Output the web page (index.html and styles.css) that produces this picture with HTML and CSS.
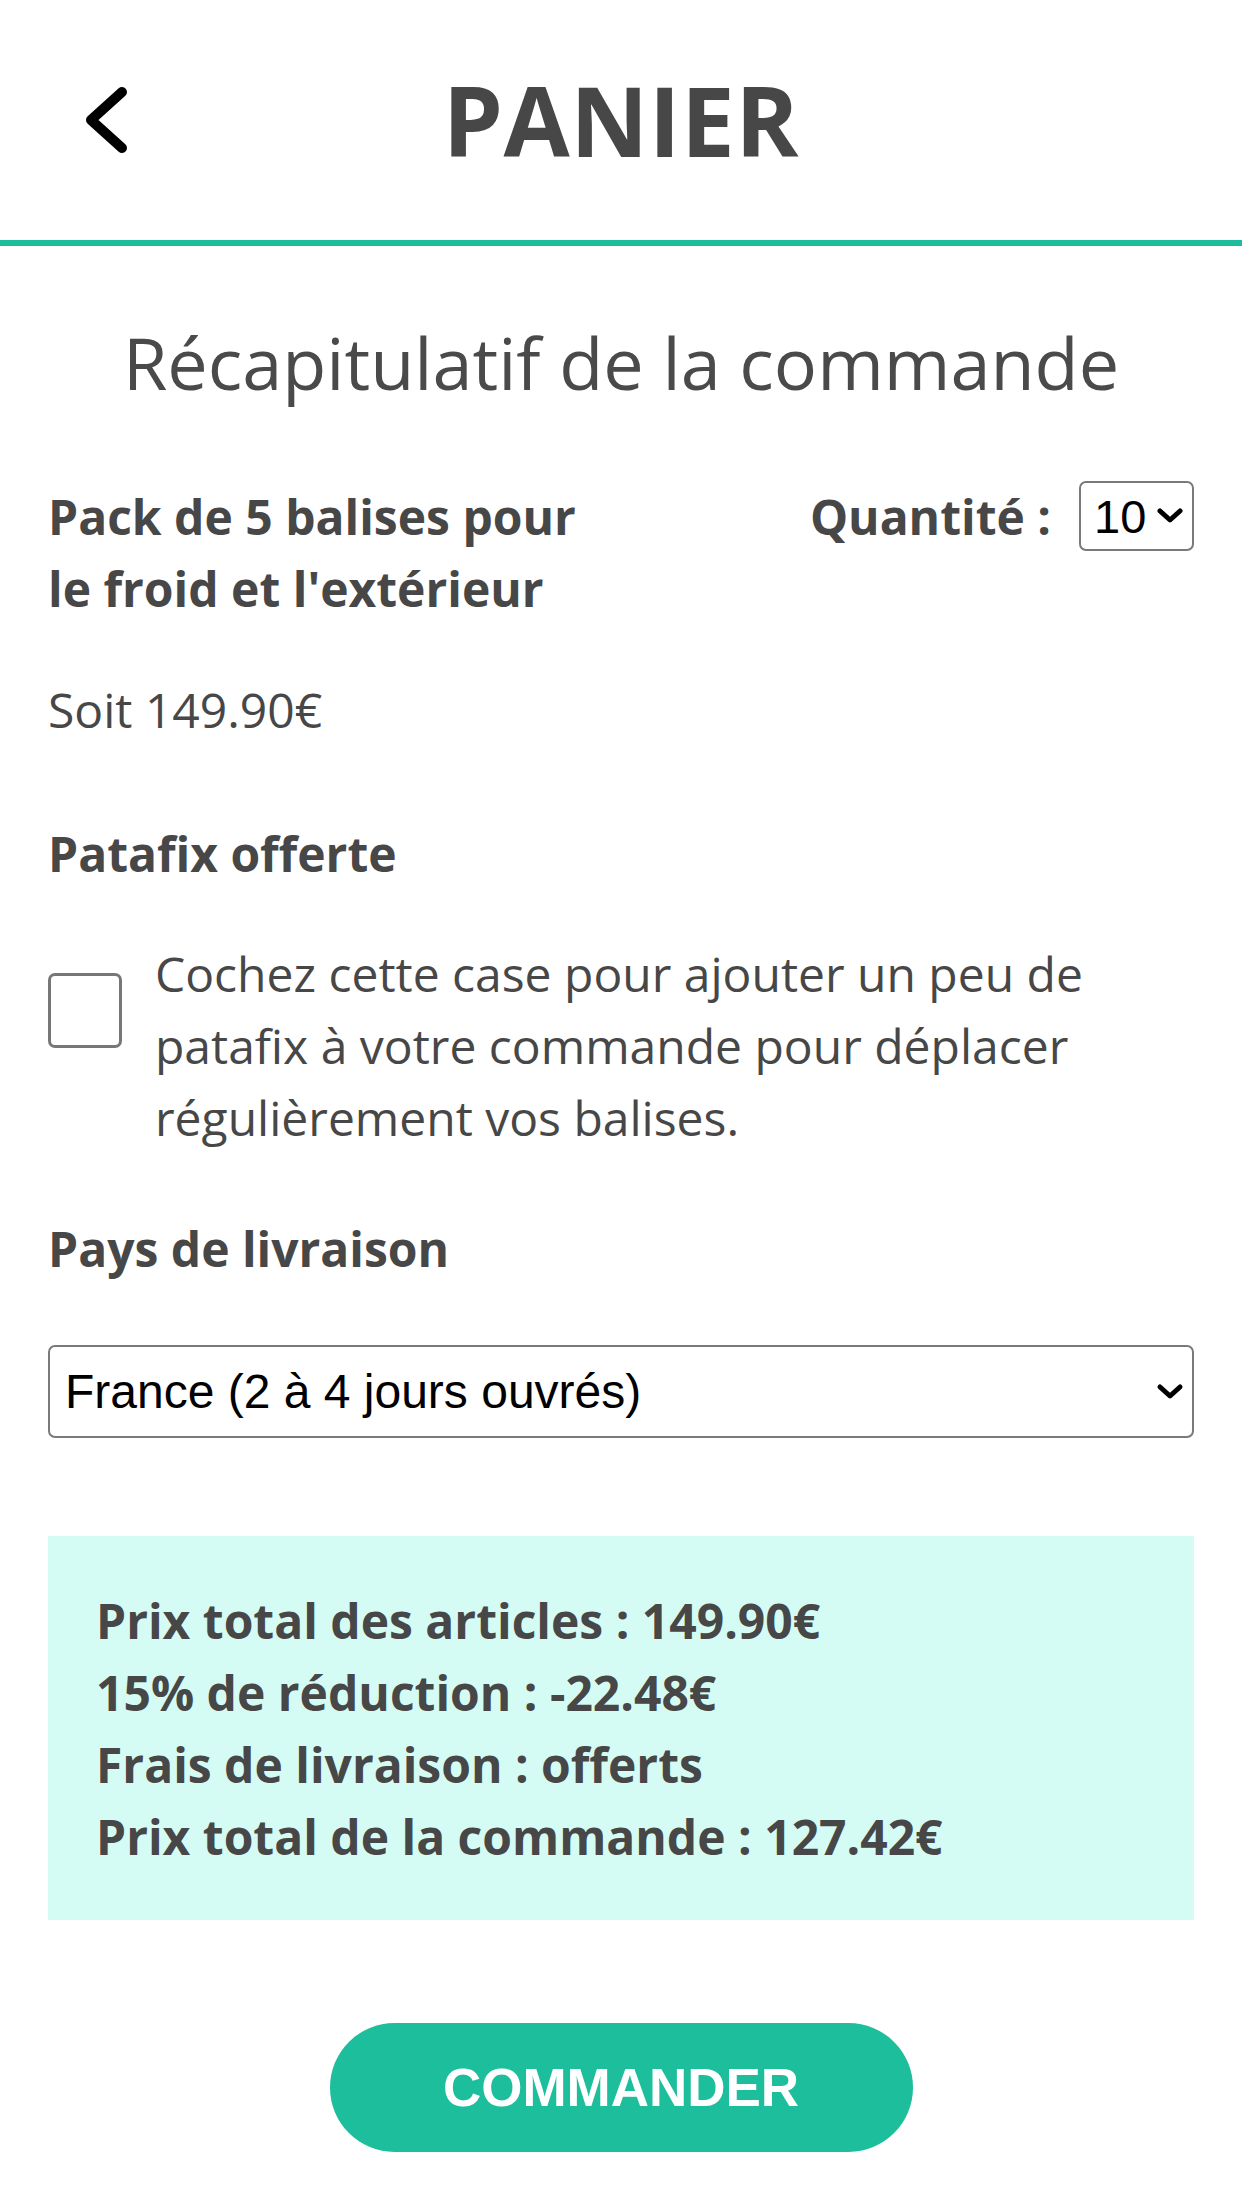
FILE: index.html
```html
<!DOCTYPE html>
<html lang="fr">
<head>
<meta charset="utf-8">
<title>Panier</title>
<link rel="stylesheet" href="styles.css">
</head>
<body>
<header class="topbar">
  <div class="topbar-left">
    <svg class="back-icon" width="50" height="74" viewBox="0 0 50 74" aria-hidden="true">
      <polyline points="41,9 10,37 41,65" fill="none" stroke="#000" stroke-width="10" stroke-linecap="round" stroke-linejoin="round"/>
    </svg>
  </div>
  <h1 class="topbar-title">PANIER</h1>
  <div class="topbar-right"></div>
</header>

<main class="content">
  <h2 class="summary-title">Récapitulatif de la commande</h2>

  <div class="product-row">
    <p class="product-name">Pack de 5 balises pour le froid et l'extérieur</p>
    <div class="qty">
      <span class="qty-label">Quantité :</span>
      <div class="select-wrap select-small">
        <select class="select">
          <option>10</option>
        </select>
        <svg class="chevron" width="28" height="18" viewBox="0 0 28 18" aria-hidden="true">
          <polyline points="4,4 14,13 24,4" fill="none" stroke="#000" stroke-width="5" stroke-linecap="round" stroke-linejoin="round"/>
        </svg>
      </div>
    </div>
  </div>

  <p class="price-line">Soit 149.90€</p>

  <p class="section-label label-patafix">Patafix offerte</p>

  <label class="check-row">
    <input type="checkbox" class="checkbox">
    <span class="check-text">Cochez cette case pour ajouter un peu de patafix à votre commande pour déplacer régulièrement vos balises.</span>
  </label>

  <p class="section-label label-pays">Pays de livraison</p>

  <div class="select-wrap select-full">
    <select class="select">
      <option>France (2 à 4 jours ouvrés)</option>
    </select>
    <svg class="chevron" width="28" height="18" viewBox="0 0 28 18" aria-hidden="true">
      <polyline points="4,4 14,13 24,4" fill="none" stroke="#000" stroke-width="5" stroke-linecap="round" stroke-linejoin="round"/>
    </svg>
  </div>

  <div class="totals">
    <p>Prix total des articles : 149.90€</p>
    <p>15% de réduction : -22.48€</p>
    <p>Frais de livraison : offerts</p>
    <p>Prix total de la commande : 127.42€</p>
  </div>

  <div class="actions">
    <button class="order-btn" type="button">COMMANDER</button>
  </div>
</main>
</body>
</html>
```

FILE: styles.css
```css
* {
  box-sizing: border-box;
}

html, body {
  margin: 0;
  padding: 0;
  background: #ffffff;
}

body {
  font-family: "Open Sans", "Noto Sans", sans-serif;
  color: #474747;
  width: 1242px;
}

p, h1, h2 {
  margin: 0;
}

.topbar {
  height: 246px;
  border-bottom: 6px solid #1dbc9c;
  display: grid;
  grid-template-columns: 1fr auto 1fr;
  align-items: center;
}

.topbar-left {
  padding-left: 81px;
  display: flex;
  align-items: center;
}

.back-icon {
  display: block;
}

.topbar-title {
  font-size: 96px;
  font-weight: 700;
  line-height: 240px;
  color: #474747;
  letter-spacing: 0.5px;
}

.content {
  padding: 0 48px 40px;
}

.summary-title {
  margin-top: 66px;
  font-size: 72px;
  font-weight: 400;
  line-height: 100px;
  text-align: center;
  color: #4a4a4a;
}

.product-row {
  margin-top: 69px;
  display: flex;
  justify-content: space-between;
  align-items: flex-start;
}

.product-name {
  flex: 0 0 50%;
  font-size: 48px;
  font-weight: 700;
  line-height: 72px;
}

.qty {
  display: flex;
  align-items: center;
  height: 72px;
  gap: 28px;
}

.qty-label {
  font-size: 48px;
  font-weight: 700;
  line-height: 72px;
}

.select-wrap {
  position: relative;
}

.select {
  -webkit-appearance: none;
  appearance: none;
  display: block;
  width: 100%;
  height: 100%;
  border: 2px solid #7a7a7a;
  border-radius: 7px;
  background: #fff;
  color: #000;
  font-family: "Liberation Sans", Arial, sans-serif;
  font-size: 48px;
  margin: 0;
}

.select-small {
  width: 115px;
  height: 70px;
  margin-top: -2px;
}

.select-small .select {
  padding: 0 0 0 13px;
  font-size: 47px;
}

.select-full {
  margin-top: 60px;
  width: 100%;
  height: 93px;
}

.select-full .select {
  padding: 0 0 0 15px;
}

.chevron {
  position: absolute;
  right: 10px;
  top: 50%;
  margin-top: -9px;
  pointer-events: none;
}

.price-line {
  margin-top: 49px;
  font-size: 48px;
  line-height: 72px;
}

.section-label {
  font-size: 48px;
  font-weight: 700;
  line-height: 72px;
}

.label-patafix {
  margin-top: 72px;
}

.check-row {
  margin-top: 48px;
  display: flex;
  align-items: flex-start;
  gap: 33px;
}

.checkbox {
  -webkit-appearance: none;
  appearance: none;
  flex: 0 0 74px;
  width: 74px;
  height: 75px;
  margin: 35px 0 0 0;
  border: 3px solid #777;
  border-radius: 7px;
  background: #fff;
}

.check-text {
  font-size: 48px;
  line-height: 72px;
}

.label-pays {
  margin-top: 59px;
}

.totals {
  margin-top: 98px;
  background: #d5fcf4;
  padding: 49px 48px 47px;
}

.totals p {
  font-size: 48px;
  font-weight: 700;
  line-height: 72px;
}

.actions {
  margin-top: 103px;
  display: flex;
  justify-content: center;
}

.order-btn {
  width: 583px;
  height: 129px;
  border: none;
  border-radius: 65px;
  background: #1dbe9b;
  color: #fff;
  font-family: "Liberation Sans", Arial, sans-serif;
  font-weight: 700;
  font-size: 53px;
  padding: 0;
}
```
